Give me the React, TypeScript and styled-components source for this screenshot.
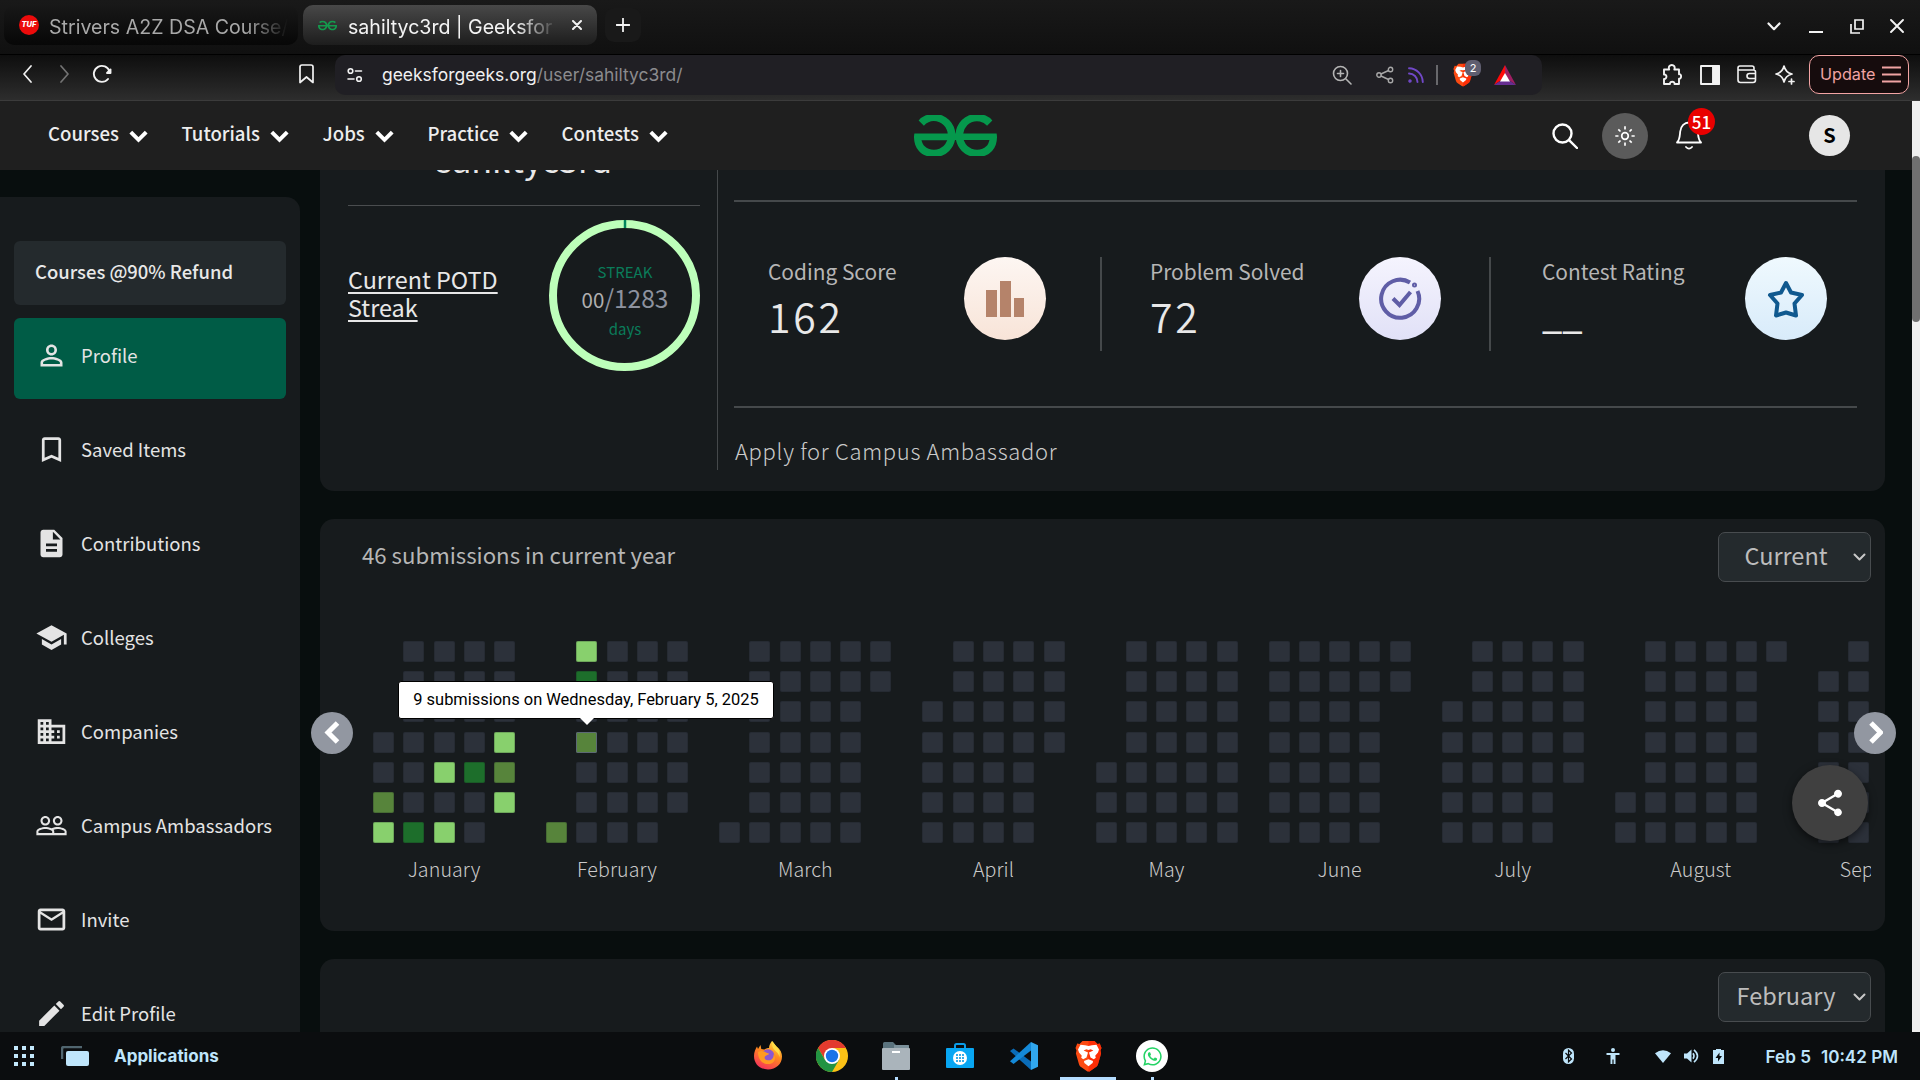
import React from "react";
import styled, { createGlobalStyle, css } from "styled-components";
import {
  MdPersonOutline,
  MdBookmarkBorder,
  MdDescription,
  MdSchool,
  MdBusiness,
  MdPeopleOutline,
  MdMailOutline,
  MdEdit,
  MdShare,
} from "react-icons/md";
import { SiGeeksforgeeks } from "react-icons/si";
import { FaWhatsapp } from "react-icons/fa";

const sans = `"Noto Sans CJK SC", "Noto Sans", sans-serif`;
const ui = `Inter, "Liberation Sans", sans-serif`;

const GlobalStyle = createGlobalStyle`
  * { box-sizing: border-box; }
  body { margin: 0; background: #080e0e; overflow: hidden; }
  svg { display: block; flex: none; }
`;

const Screen = styled.div`
  width: 1920px;
  height: 1080px;
  display: flex;
  flex-direction: column;
  overflow: hidden;
  font-family: ${sans};
  color: #e8e8e8;
`;

/* ---------- browser chrome ---------- */

const TabStrip = styled.div`
  height: 55px;
  flex: none;
  display: flex;
  align-items: flex-start;
  padding: 5px 16px 0 4px;
  background: linear-gradient(#191919, #101010);
  border-bottom: 1px solid #000;
  font-family: ${ui};
`;

const Tab = styled.div<{ $active?: boolean }>`
  width: 294px;
  height: 40px;
  margin-right: 5px;
  padding: 0 15px;
  display: flex;
  align-items: center;
  border-radius: 10px;
  background: ${(p) => (p.$active ? "linear-gradient(#484848, #1d1d1d)" : "linear-gradient(#181818, #070707)")};
`;

const TabTitle = styled.div<{ $active?: boolean }>`
  flex: 1;
  margin-left: ${(p) => (p.$active ? 11 : 10)}px;
  margin-right: ${(p) => (p.$active ? 0 : -5)}px;
  overflow: hidden;
  white-space: nowrap;
  font-size: 19.6px;
  line-height: 38px;
  padding-top: 3px;
  color: ${(p) => (p.$active ? "#f4f4f4" : "#a9a9a9")};
  mask-image: linear-gradient(to right, #000 calc(100% - 42px), transparent);
`;

const TufBadge = styled.div`
  width: 20px;
  height: 20px;
  border-radius: 50%;
  background: #ec0b0b;
  color: #fff;
  font: italic 800 7.5px/20px ${ui};
  text-align: center;
`;

const NewTab = styled.div`
  width: 36px;
  height: 34px;
  margin: 3px auto 0 3px;
  border-radius: 9px;
  background: #191919;
  display: grid;
  place-items: center;
`;

const WindowButtons = styled.div`
  display: flex;
  align-items: center;
  height: 42px;
  gap: 26.5px;
`;

const Toolbar = styled.div`
  height: 46px;
  flex: none;
  display: flex;
  align-items: flex-start;
  padding: 0 11px 0 18px;
  background: linear-gradient(#0e0e0e, #2d2d2d);
  border-bottom: 1px solid #3b3b3b;
  font-family: ${ui};
`;

const NavKeys = styled.div`
  display: flex;
  align-items: center;
  height: 38px;
  width: 317px;
  gap: 17px;
  & > :last-child { margin-left: auto; margin-right: 21px; }
`;

const UrlBar = styled.div`
  width: 1207px;
  height: 40px;
  padding: 0 26px 0 10px;
  display: flex;
  align-items: center;
  border-radius: 10px;
  background: #201f24;
`;

const Url = styled.div`
  flex: 1;
  margin: -1px 0 0 19px;
  font-size: 17.45px;
  color: #f0f0f0;
  span { color: #8b8b8e; }
`;

const UrlTools = styled.div`
  display: flex;
  align-items: center;
`;

const ToolSeparator = styled.div`
  width: 2px;
  height: 20px;
  margin: 0 15px 0 12px;
  background: #68686c;
`;

const Shield = styled.div`
  position: relative;
  width: 20px;
  height: 24px;
  margin-right: 21px;
`;

const ShieldCount = styled.div`
  position: absolute;
  left: 12px;
  top: -3px;
  width: 16px;
  height: 16px;
  border-radius: 6px;
  background: #5f5e70;
  color: #fff;
  font-size: 11px;
  line-height: 16px;
  text-align: center;
`;

const ToolbarIcons = styled.div`
  display: flex;
  align-items: center;
  height: 39px;
  gap: 17.6px;
  margin-left: auto;
  margin-right: 14px;
`;

const UpdateButton = styled.div`
  width: 100px;
  height: 39px;
  padding: 0 7px 1px 10px;
  display: flex;
  align-items: center;
  justify-content: space-between;
  border: 1.5px solid #f3a4a4;
  border-radius: 10px;
  background: #160c0d;
  color: #f0a3a3;
  font-size: 16.2px;
`;

/* ---------- web page ---------- */

const PageRow = styled.div`
  flex: 1;
  min-height: 0;
  display: flex;
`;

const Page = styled.div`
  width: 1912px;
  display: flex;
  flex-direction: column;
  overflow: hidden;
  background: #080e0e;
`;

const ScrollTrack = styled.div`
  width: 8px;
  padding-top: 55px;
  background: #efefef;
`;

const ScrollThumb = styled.div`
  height: 166px;
  border-radius: 5px;
  background: #707070;
`;

const SiteNav = styled.nav`
  height: 69px;
  flex: none;
  display: grid;
  grid-template-columns: 1fr auto 1fr;
  align-items: center;
  padding: 0 62px 0 48px;
  background: #1f1f1f;
`;

const Menu = styled.div`
  display: flex;
  gap: 33.6px;
  margin-top: -6px;
`;

const MenuItem = styled.div`
  display: flex;
  align-items: center;
  gap: 10px;
  font-size: 18.6px;
  line-height: 30px;
  font-weight: 500;
  color: #ededed;
  svg { margin-top: 7px; }
`;

const Logo = styled.div`
  margin-left: 13px;
  color: #05984c;
`;

const NavActions = styled.div`
  display: flex;
  align-items: center;
  justify-content: flex-end;
`;

const ThemeToggle = styled.div`
  width: 46px;
  height: 46px;
  margin: 0 28px 0 24px;
  border-radius: 50%;
  background: #5b5b5b;
  display: grid;
  place-items: center;
`;

const Bell = styled.div`
  position: relative;
  width: 26px;
  margin-right: 107px;
`;

const BellCount = styled.div`
  position: absolute;
  left: 12px;
  top: -13px;
  width: 27px;
  height: 27px;
  border-radius: 50%;
  background: #e90000;
  color: #fff;
  font-size: 17px;
  font-weight: 500;
  line-height: 27px;
  text-align: center;
`;

const Avatar = styled.div`
  width: 41px;
  height: 41px;
  border-radius: 50%;
  background: #e6e6e6;
  color: #000;
  font-size: 20px;
  font-weight: 700;
  line-height: 39px;
  text-align: center;
`;

const Body = styled.div`
  flex: 1;
  min-height: 0;
  display: flex;
  gap: 20px;
  overflow: hidden;
`;

const Sidebar = styled.aside`
  width: 300px;
  height: 900px;
  flex: none;
  margin-top: 27px;
  padding: 44px 14px 0;
  display: flex;
  flex-direction: column;
  gap: 13px;
  border-radius: 0 14px 0 0;
  background: #171b1d;
`;

const Promo = styled.div`
  height: 64px;
  flex: none;
  padding: 0 21px;
  border-radius: 6px;
  background: #242a2d;
  font-size: 18.45px;
  font-weight: 500;
  line-height: 60px;
`;

const SideItem = styled.div<{ $active?: boolean }>`
  height: 81px;
  flex: none;
  display: flex;
  align-items: center;
  gap: 13.5px;
  padding: 0 0 8px 20.5px;
  border-radius: 6px;
  background: ${(p) => (p.$active ? "#005c46" : "transparent")};
  font-size: 18.5px;
  color: #e4e4e4;
  svg { margin-top: 2px; }
`;

const Main = styled.main`
  width: 1565px;
  display: flex;
  flex-direction: column;
  gap: 28px;
`;

const Panel = styled.section<{ $height: number; $square?: boolean }>`
  position: relative;
  height: ${(p) => p.$height}px;
  flex: none;
  border-radius: ${(p) => (p.$square ? "0 0 14px 14px" : "14px")};
  background: #171b1d;
`;

const ProfilePanel = styled(Panel)`
  display: flex;
  padding-left: 28px;
`;

const Identity = styled.div`
  width: 370px;
  height: 300px;
  padding-right: 17px;
  border-right: 1px solid #45494b;
`;

const UserName = styled.div`
  display: flow-root;
  height: 36px;
  border-bottom: 1px solid #4a4d4f;
  font-size: 34.2px;
  line-height: 44px;
  text-align: center;
  span { display: block; margin-top: -34px; }
`;

const PotdRow = styled.div`
  display: flex;
  justify-content: space-between;
  padding-top: 14px;
`;

const PotdLabel = styled.div`
  width: 170px;
  margin-top: 45px;
  font-size: 23.4px;
  line-height: 28px;
  text-decoration: underline;
  text-decoration-thickness: 1.5px;
  text-underline-offset: 3px;
`;

const Ring = styled.div`
  position: relative;
  width: 152px;
  height: 152px;
`;

const RingText = styled.div`
  position: absolute;
  inset: 0 -1px 0 1px;
  padding-top: 42px;
  text-align: center;
  color: #0a7c5a;
  font-size: 15px;
  line-height: 20px;
`;

const StreakCount = styled.div`
  margin: -2px 0 2px;
  font-size: 24.5px;
  line-height: 36px;
  color: #8d929f;
  span { font-size: 20.5px; color: #b0b0b0; }
`;

const StatsColumn = styled.div`
  width: 1123px;
  margin-left: 16px;
  padding-top: 30px;
`;

const StatsRow = styled.div`
  height: 208px;
  padding-top: 55px;
  display: grid;
  grid-template-columns: 368px 389px 366px;
  border: solid #45494b;
  border-width: 2px 0;
`;

const Stat = styled.div<{ $left: number; $right: number; $last?: boolean }>`
  height: 94px;
  display: flex;
  justify-content: space-between;
  padding: 0 ${(p) => p.$right}px 0 ${(p) => p.$left}px;
  ${(p) => !p.$last && css`border-right: 2px solid #45494b;`}
`;

const StatLabel = styled.div`
  font-size: 20.9px;
  line-height: 28px;
  white-space: nowrap;
  color: #b6b6b6;
`;

const StatValue = styled.div<{ $empty?: boolean }>`
  margin-top: ${(p) => (p.$empty ? 2 : 4)}px;
  font-size: ${(p) => (p.$empty ? 36 : 41)}px;
  line-height: 52px;
  font-weight: ${(p) => (p.$empty ? 500 : 350)};
  letter-spacing: ${(p) => (p.$empty ? 0 : 2.7)}px;
`;

const StatIcon = styled.div<{ $from: string; $to: string }>`
  width: 82px;
  height: 83px;
  border-radius: 50%;
  background: linear-gradient(${(p) => p.$from}, ${(p) => p.$to});
  display: grid;
  place-items: center;
`;

const Apply = styled.div`
  margin: 28px 0 0 1px;
  font-size: 22px;
  line-height: 29px;
  letter-spacing: 0.68px;
  font-weight: 300;
  color: #cbcbcb;
`;

const PanelHead = styled.div`
  display: flex;
  justify-content: space-between;
  padding: 13px 14px 0 42px;
`;

const PanelTitle = styled.div`
  font-size: 22.2px;
  line-height: 45px;
  color: #b6b6b6;
`;

const Select = styled.div`
  width: 153px;
  height: 50px;
  padding: 0 4px 4px 0;
  display: flex;
  align-items: center;
  border: 1px solid #484c4f;
  border-radius: 7px;
  background: #242a2d;
  color: #bcbcbc;
  font-size: 23.5px;
  span { flex: 1; text-align: center; }
  svg { margin-top: 5px; }
`;

const HeatMap = styled.div`
  width: 1498px;
  margin: 59px 0 0 53px;
  display: flex;
  gap: 31px;
  overflow: hidden;
`;

const Month = styled.div`
  flex: none;
  text-align: center;
`;

const Days = styled.div<{ $cols: number }>`
  display: grid;
  grid-auto-flow: column;
  grid-template-rows: repeat(7, 21px);
  grid-template-columns: repeat(${(p) => p.$cols}, 21px);
  gap: 9.2px 9.27px;
`;

const levels = ["#2c313a", "#88d06d", "#57843b", "#1d6e2b"];

const Day = styled.div<{ $level: number; $row?: number; $hover?: boolean }>`
  grid-row-start: ${(p) => p.$row ?? "auto"};
  border-radius: 2px;
  background: ${(p) => levels[p.$level]};
  box-shadow: inset 0 0 0 1px ${(p) => (p.$hover ? "#5c6975" : "rgba(20, 24, 26, 0.22)")};
`;

const MonthName = styled.div`
  margin-top: 11px;
  font-size: 19.6px;
  line-height: 30px;
  font-weight: 300;
  letter-spacing: 0.1px;
  color: #cacaca;
`;

const Tooltip = styled.div`
  position: absolute;
  left: 78px;
  top: 162px;
  width: 376px;
  height: 38px;
  border: 1px solid #000;
  border-radius: 3px;
  background: #fff;
  color: #000;
  font: 16.45px/36px Roboto, sans-serif;
  text-align: center;
  &::after {
    content: "";
    position: absolute;
    left: 181px;
    top: 36px;
    border: 7px solid transparent;
    border-top-color: #fff;
    border-bottom: 0;
  }
`;

const Pager = styled.div<{ $left: number }>`
  position: absolute;
  left: ${(p) => p.$left}px;
  top: 193px;
  width: 42px;
  height: 42px;
  border-radius: 50%;
  background: #9297a1;
  display: grid;
  place-items: center;
`;

const ShareFab = styled.div`
  position: absolute;
  left: 1472px;
  top: 246px;
  width: 76px;
  height: 76px;
  border-radius: 50%;
  background: #404040;
  box-shadow: 0 3px 8px rgba(0, 0, 0, 0.55);
  display: grid;
  place-items: center;
`;

/* ---------- desktop bar ---------- */

const Taskbar = styled.div`
  height: 48px;
  flex: none;
  display: grid;
  grid-template-columns: 1fr auto 1fr;
  padding: 0 22px 0 14px;
  background: #0b0d0f;
  color: #bfe5fb;
  font-family: ${ui};
  font-weight: 600;
`;

const Launcher = styled.div`
  display: flex;
  align-items: center;
  font-size: 17px;
  span { margin-left: 25px; font-weight: 700; }
`;

const DotGrid = styled.div`
  display: grid;
  grid-template-columns: repeat(3, 4px);
  gap: 4px;
  margin-right: 27px;
  i { height: 4px; background: #c3e8fc; }
`;

const Apps = styled.div`
  display: flex;
  margin-left: 8px;
`;

const DockApp = styled.div<{ $mark?: number }>`
  width: 64px;
  display: flex;
  flex-direction: column;
  align-items: center;
  justify-content: space-between;
  padding-top: 8px;
  &::after {
    content: "";
    width: ${(p) => p.$mark ?? 0}px;
    height: 3px;
    background: #b4dcff;
  }
`;

const WhatsApp = styled.div`
  width: 32px;
  height: 32px;
  border-radius: 50%;
  background: #fff;
  color: #25d366;
  display: grid;
  place-items: center;
`;

const Tray = styled.div`
  display: flex;
  align-items: center;
  justify-content: flex-end;
  font-size: 17.1px;
`;

const Clock = styled.div`
  display: flex;
  gap: 10px;
  margin-left: 42px;
`;

const Gap = styled.div<{ $w: number }>`
  width: ${(p) => p.$w}px;
`;

/* ---------- drawings ---------- */

const Stroke = (p: { w: number; h: number; c?: string; s?: number; round?: boolean; children: React.ReactNode }) => (
  <svg
    width={p.w}
    height={p.h}
    viewBox={`0 0 ${p.w} ${p.h}`}
    fill="none"
    stroke={p.c ?? "#f2f2f2"}
    strokeWidth={p.s ?? 1.6}
    strokeLinecap={p.round === false ? "butt" : "round"}
    strokeLinejoin={p.round === false ? "miter" : "round"}
  >
    {p.children}
  </svg>
);

const MenuChevron = () => (
  <Stroke w={19} h={13} c="#fff" s={4} round={false}>
    <path d="M1.8 2.2l7.7 7.6 7.7-7.6" />
  </Stroke>
);

const SelectChevron = () => (
  <Stroke w={13} h={9} c="#c8c8c8" s={2}>
    <path d="M1.5 1.5l5 5 5-5" />
  </Stroke>
);

const BraveLion = ({ size }: { size: number }) => (
  <svg width={size} height={(size * 32) / 27} viewBox="0 0 27 32">
    <path d="M7.5 1h12l3 3 2.3-.4L26.5 8l-1 2.5.6 3-3 10.5c-.4 1.5-1.3 2.5-2.5 3.3l-6 4.2h-2.2l-6-4.2c-1.2-.8-2.1-1.8-2.5-3.3L.9 13.5l.6-3L.5 8l1.7-4.4L4.500 4z" fill="#fb4a12" />
    <path d="M13.5 1h6l3 3 2.3-.4L26.5 8l-1 2.5.6 3-3 10.5c-.4 1.5-1.3 2.5-2.5 3.3l-6 4.2h-1.1z" fill="#ff1f00" opacity=".65" />
    <path d="M13.5 6l3.500-.8 4.500-.4 2.500 4.700-1 3-2.800 3.200.6 2-2 1.600-3.300-1.800-1.500-5 4.400-2-2.800-1.200-2.100.6-2.100-.6L8.600 10.500l4.400 2-1.500 5L8.200 19.300l-2-1.600.6-2L4 12.500l-1-3L5.500 4.800l4.500.4z" fill="#fff" />
    <path d="M9 21l4.500-1.800L18 21l-.4 2-4.1 3.300L9.400 23z" fill="#fff" />
  </svg>
);

const Firefox = () => (
  <svg width="30" height="30" viewBox="0 0 30 30">
    <defs>
      <linearGradient id="ff" x1=".8" y1="0" x2=".3" y2="1">
        <stop offset="0" stopColor="#ffe14a" />
        <stop offset=".45" stopColor="#ff8a1e" />
        <stop offset="1" stopColor="#f5305c" />
      </linearGradient>
    </defs>
    <path d="M19 1c2 2 3 4 4.5 5.5C27.5 9.5 29 13 29 16.5 29 24 23 29.5 15 29.5S1 24 1 16c0-4 1.5-7 3-9.5l1 2.5L7.5 5l.8 4 3 .6c2-1.6 3.7-1.6 4.7-1.6C16 5 17.500 3 19 1z" fill="url(#ff)" />
    <circle cx="15" cy="15.5" r="6.2" fill="#8a58d0" />
    <path d="M5 12c3-2 6-1 8 .5 1.500 1 3 .5 3 1.300 0 1.200-3 1.300-4 2.800-1 1.300 0 3.500 3 3.700 4 .3 6-3 5.500-6C23.500 17 22 24 15.500 24 9 24.500 5 19 5 12z" fill="#ff9a22" />
    <path d="M19 1c2 2 3 4 4.500 5.500C27 9.500 27 14 26.500 17c-1-4-3-5-5-7s-3-5-2.500-9z" fill="#ffdc45" />
  </svg>
);

const Chrome = () => (
  <svg width="32" height="32" viewBox="0 0 32 32">
    <circle cx="16" cy="16" r="16" fill="#fbc116" />
    <path d="M2.1 8A16 16 0 0 1 29.9 8H16l-7 11.5z" fill="#e33b2e" />
    <path d="M2.100 8A16 16 0 0 0 16 32l7-12-7 2-6.900-2z" fill="#229342" />
    <circle cx="16" cy="16" r="8" fill="#fff" />
    <circle cx="16" cy="16" r="6.2" fill="#1a73e8" />
  </svg>
);

const Files = () => (
  <svg width="30" height="32" viewBox="0 0 30 32">
    <path d="M2 10V3.500Q2 2 3.500 2H12l3 3h12q1 0 1 1v6z" fill="#5a727d" />
    <path d="M13 5h14q1 0 1 1v4H13z" fill="#7c919b" />
    <rect x="1" y="8" width="28" height="22" rx="1" fill="#aab4bb" />
    <rect x="11" y="11" width="8" height="2" fill="#fff" />
  </svg>
);

const Store = () => (
  <svg width="28" height="32" viewBox="0 0 28 32">
    <path d="M9 9V5.500Q9 4 10.500 4h7Q19 4 19 5.500V9" fill="none" stroke="#0a9be6" strokeWidth="2" />
    <rect y="8" width="28" height="20" rx="1" fill="#08a6f3" />
    <circle cx="14" cy="18" r="7" fill="#fff" />
    <path d="M10 14h2v2h-2zM13 14h2v2h-2zM16 14h2v2h-2zM10 17h2v2h-2zM13 17h2v2h-2zM16 17h2v2h-2zM10 20h2v2h-2zM13 20h2v2h-2zM16 20h2v2h-2z" fill="#38aeea" />
  </svg>
);

const VsCode = () => (
  <svg width="28" height="32" viewBox="0 0 28 32">
    <path d="M21 30v-8.500L3.500 8.500 0 11z" fill="#0a6cb8" />
    <path d="M0 21.300L3.500 24 21 10.500V2z" fill="#1489d8" />
    <path d="M21 2l7 3.200v21.600L21 30z" fill="#31a7ee" />
  </svg>
);

/* ---------- data ---------- */

const sideItems = [
  { label: "Profile", Icon: MdPersonOutline },
  { label: "Saved Items", Icon: MdBookmarkBorder },
  { label: "Contributions", Icon: MdDescription },
  { label: "Colleges", Icon: MdSchool },
  { label: "Companies", Icon: MdBusiness },
  { label: "Campus Ambassadors", Icon: MdPeopleOutline },
  { label: "Invite", Icon: MdMailOutline },
  { label: "Edit Profile", Icon: MdEdit },
];

const monthNames = ["January", "February", "March", "April", "May", "June", "July", "August", "September"];

const activity: Record<string, number> = {
  "0-3": 2, "0-4": 1, "0-11": 3, "0-16": 1, "0-18": 1, "0-23": 3,
  "0-29": 1, "0-30": 2, "0-31": 1, "1-1": 2, "1-2": 1, "1-3": 3, "1-5": 2,
};

const months = monthNames.map((name, m) => {
  const first = new Date(2025, m, 1).getDay();
  const count = new Date(2025, m + 1, 0).getDate();
  return { name, first, count, cols: Math.ceil((first + count) / 7) };
});

export default function App() {
  return (
    <Screen>
      <GlobalStyle />
      <TabStrip>
        <Tab>
          <TufBadge>TUF</TufBadge>
          <TabTitle>Strivers A2Z DSA Course/</TabTitle>
        </Tab>
        <Tab $active>
          <SiGeeksforgeeks size={19} color="#149a4d" />
          <TabTitle $active>sahiltyc3rd | Geeksfor</TabTitle>
          <Gap $w={14} />
          <Stroke w={10} h={10} s={2}><path d="M1 1l8 8M9 1L1 9" /></Stroke>
        </Tab>
        <NewTab><Stroke w={14} h={14} s={1.8}><path d="M7 .5v13M.5 7h13" /></Stroke></NewTab>
        <WindowButtons>
          <Stroke w={14} h={9} s={2.2}><path d="M1.5 1.5L7 7.200l5.500-5.700" /></Stroke>
          <Stroke w={16} h={16} s={2} round={false}><path d="M2 14h14" /></Stroke>
          <Stroke w={14} h={15} s={1.7} round={false}><path d="M5 1h8v9H5zM1 5v9h9" /></Stroke>
          <Stroke w={14} h={14} s={1.9}><path d="M1 1l12 12M13 1L1 13" /></Stroke>
        </WindowButtons>
      </TabStrip>

      <Toolbar>
        <NavKeys>
          <Stroke w={20} h={18} s={1.7}><path d="M13 1L6 9l7 8" /></Stroke>
          <Stroke w={20} h={18} c="#737373" s={1.7}><path d="M6 1l7 8-7 8" /></Stroke>
          <Stroke w={20} h={20} s={1.9}>
            <path d="M16 15A8 8 0 1 1 17.500 7.500" />
            <path d="M18.500 5.500v3.500h-3.500z" fill="#f2f2f2" />
          </Stroke>
          <Stroke w={15} h={20} s={1.7}><path d="M1 3q0-2 2-2h9q2 0 2 2v15.500l-6.500-5.500L1 18.500z" /></Stroke>
        </NavKeys>
        <UrlBar>
          <Gap $w={2} />
          <Stroke w={16} h={16} s={1.6}>
            <circle cx="3.5" cy="4" r="2.3" /><path d="M8.5 4h6M1 12h6" /><circle cx="12" cy="12" r="2.3" />
          </Stroke>
          <Url>geeksforgeeks.org<span>/user/sahiltyc3rd/</span></Url>
          <UrlTools>
            <Stroke w={20} h={20} c="#b4b4b4"><circle cx="8.5" cy="8.5" r="7" /><path d="M14 14l5 5M8.5 5.5v6M5.500 8.500h6" /></Stroke>
            <Gap $w={24} />
            <Stroke w={18} h={18} c="#a8a8a8" s={1.4}><circle cx="3" cy="9" r="2.2" /><circle cx="14.5" cy="3.5" r="2.2" /><circle cx="14.5" cy="14.5" r="2.2" /><path d="M5 8l7.500-3.500M5 10l7.500 3.500" /></Stroke>
            <Gap $w={14} />
            <Stroke w={16} h={16} c="#7148c8" s={1.9}><path d="M1 1.200A14 14 0 0 1 14.800 15M1 6.500A8.500 8.500 0 0 1 9.500 15" /><circle cx="2" cy="14" r=".8" /></Stroke>
            <ToolSeparator />
            <Shield><BraveLion size={20} /><ShieldCount>2</ShieldCount></Shield>
            <svg width="22" height="20" viewBox="0 0 22 20">
              <path d="M11 0L0 20l11-7.500z" fill="#ff0a0a" /><path d="M11 0l11 20-11-7.500z" fill="#9e1f63" /><path d="M0 20h22l-6-4H6z" fill="#662d91" /><path d="M11 8l-5 8.500h10z" fill="#fff" />
            </svg>
          </UrlTools>
        </UrlBar>
        <ToolbarIcons>
          <Stroke w={20} h={21} s={1.9}><path d="M2 5.500h5.200C6 2.500 8 1 9.800 1s3.700 1.500 2.500 4.500H17v4.700c3-.5 2.500 5 0 4.500V20h-4.500c.5-3-5-3-4.500 0H2v-5c3 .5 3.500-5 0-4.500z" /></Stroke>
          <Stroke w={20} h={20} s={1.9}><rect x="1" y="1" width="18" height="18" /><path d="M13 1h6v18h-6z" fill="#f2f2f2" /></Stroke>
          <Stroke w={20} h={19} s={1.6}><path d="M17 5V3q0-2-2-2H3Q1 1 1 3v12q0 2.500 2.500 2.500H16q2.500 0 2.500-2.500V7q0-2-2-2H2M18.500 8.500h-6q-2.500 0-2.500 2.500t2.500 2.500h6" /></Stroke>
          <Stroke w={20} h={20} s={1.7}><path d="M9 1q1.500 6.500 8 8-6.500 1.500-8 8-1.500-6.500-8-8 6.500-1.500 8-8zM16.500 14v5M14 16.500h5" /></Stroke>
        </ToolbarIcons>
        <UpdateButton>
          Update
          <Stroke w={19} h={17} c="#f0a3a3" s={1.8} round={false}><path d="M0 1.500h19M0 8.500h19M0 15.500h19" /></Stroke>
        </UpdateButton>
      </Toolbar>

      <PageRow>
        <Page>
          <SiteNav>
            <Menu>
              {["Courses", "Tutorials", "Jobs", "Practice", "Contests"].map((label) => (
                <MenuItem key={label}>{label}<MenuChevron /></MenuItem>
              ))}
            </Menu>
            <Logo>
              <SiGeeksforgeeks size={83} viewBox="0 6.2 24 11.6" style={{ height: 41 }} preserveAspectRatio="none" />
            </Logo>
            <NavActions>
              <Stroke w={26} h={26} c="#fff" s={2.4}><circle cx="10.5" cy="10.5" r="9" /><path d="M17.300 17.300L25 25" /></Stroke>
              <ThemeToggle>
                <Stroke w={20} h={20} c="#fff" s={1.7} round={false}>
                  <circle cx="10" cy="10" r="3.3" />
                  <path d="M10 .3v3.200M10 16.500v3.200M.3 10h3.200M16.500 10h3.200M3.300 3.300l2.200 2.200M14.500 14.500l2.200 2.200M3.300 16.700l2.200-2.200M14.500 5.500l2.200-2.200" />
                </Stroke>
              </ThemeToggle>
              <Bell>
                <Stroke w={26} h={29} c="#fff" s={1.8}>
                  <path d="M1 21.500C4 18.500 3.800 14 4.200 10.500 4.800 5 8.500 1.500 13 1.500s8.200 3.500 8.800 9c.4 3.500.2 8 3.200 11zM10 26q3 3.200 6 0" />
                </Stroke>
                <BellCount>51</BellCount>
              </Bell>
              <Avatar>S</Avatar>
            </NavActions>
          </SiteNav>

          <Body>
            <Sidebar>
              <Promo>Courses @90% Refund</Promo>
              {sideItems.map(({ label, Icon }, i) => (
                <SideItem key={label} $active={i === 0}>
                  <Icon size={33} />
                  {label}
                </SideItem>
              ))}
            </Sidebar>

            <Main>
              <ProfilePanel $height={321} $square>
                <Identity>
                  <UserName><span>sahiltyc3rd</span></UserName>
                  <PotdRow>
                    <PotdLabel>Current POTD Streak</PotdLabel>
                    <Ring>
                      <svg width="153" height="152">
                        <circle cx="76.5" cy="75.5" r="71.5" fill="none" stroke="#bdffba" strokeWidth="8" />
                        <path d="M77 0v8" stroke="#00855c" strokeWidth="2.5" />
                      </svg>
                      <RingText>
                        STREAK
                        <StreakCount><span>00</span>/1283</StreakCount>
                        days
                      </RingText>
                    </Ring>
                  </PotdRow>
                </Identity>
                <StatsColumn>
                  <StatsRow>
                    <Stat $left={34} $right={54}>
                      <div><StatLabel>Coding Score</StatLabel><StatValue>162</StatValue></div>
                      <StatIcon $from="#fdf6f2" $to="#f8e4d8">
                        <svg width="40" height="36"><path d="M1 9h11v27H1zM15 0h11v36H15zM29 17h10v19H29z" fill="#b5836a" /></svg>
                      </StatIcon>
                    </Stat>
                    <Stat $left={48} $right={48}>
                      <div><StatLabel>Problem Solved</StatLabel><StatValue>72</StatValue></div>
                      <StatIcon $from="#f5f4fe" $to="#e1e1f7">
                        <Stroke w={44} h={44} c="#5f5da6" s={4} round={false}>
                          <path d="M32 5.500A19 19 0 1 0 39.500 14" /><path d="M15 21.500l6.500 6.500L32.500 15" />
                          <circle cx="36.5" cy="8" r="1" strokeWidth="3" />
                        </Stroke>
                      </StatIcon>
                    </Stat>
                    <Stat $left={51} $right={30} $last>
                      <div><StatLabel>Contest Rating</StatLabel><StatValue $empty>__</StatValue></div>
                      <StatIcon $from="#eff9fe" $to="#d8ebfa">
                        <Stroke w={38} h={38} c="#10598f" s={4}>
                          <path d="M19 3l5 9.500 11 2.500-7.500 8.500 1.500 12-10-3-10 3 1.500-12L3 15l11-2.500z" />
                        </Stroke>
                      </StatIcon>
                    </Stat>
                  </StatsRow>
                  <Apply>Apply for Campus Ambassador</Apply>
                </StatsColumn>
              </ProfilePanel>

              <Panel $height={412}>
                <PanelHead>
                  <PanelTitle>46 submissions in current year</PanelTitle>
                  <Select><span>Current</span><SelectChevron /></Select>
                </PanelHead>
                <HeatMap>
                  {months.map(({ name, first, count, cols }, m) => (
                    <Month key={name}>
                      <Days $cols={cols}>
                        {Array.from({ length: count }, (_, d) => (
                          <Day
                            key={d}
                            $row={d === 0 ? first + 1 : undefined}
                            $level={activity[`${m}-${d + 1}`] ?? 0}
                            $hover={m === 1 && d === 4}
                          />
                        ))}
                      </Days>
                      <MonthName>{name}</MonthName>
                    </Month>
                  ))}
                </HeatMap>
                <Tooltip>9 submissions on Wednesday, February 5, 2025</Tooltip>
                <Pager $left={-9.5}><Stroke w={16} h={24} c="#fff" s={5} round={false}><path d="M13.500 2L4 11.500l9.500 9.500" /></Stroke></Pager>
                <Pager $left={1534}><Stroke w={16} h={24} c="#fff" s={5} round={false}><path d="M4 2l9.500 9.500L4 21" /></Stroke></Pager>
                <ShareFab><MdShare size={32} color="#fff" /></ShareFab>
              </Panel>

              <Panel $height={200}>
                <PanelHead>
                  <PanelTitle />
                  <Select><span>February</span><SelectChevron /></Select>
                </PanelHead>
              </Panel>
            </Main>
          </Body>
        </Page>
        <ScrollTrack><ScrollThumb /></ScrollTrack>
      </PageRow>

      <Taskbar>
        <Launcher>
          <DotGrid>{Array.from({ length: 9 }, (_, i) => <i key={i} />)}</DotGrid>
          <svg width="28" height="20" viewBox="0 0 28 20">
            <path d="M1 13V3q0-2 2-2h18" fill="none" stroke="#50656f" strokeWidth="2.5" />
            <rect x="5" y="5" width="23" height="15" rx="2" fill="#bfe5fb" />
          </svg>
          <span>Applications</span>
        </Launcher>
        <Apps>
          <DockApp><Firefox /></DockApp>
          <DockApp><Chrome /></DockApp>
          <DockApp $mark={3}><Files /></DockApp>
          <DockApp><Store /></DockApp>
          <DockApp><VsCode /></DockApp>
          <DockApp $mark={56}><BraveLion size={27} /></DockApp>
          <DockApp $mark={3}><WhatsApp><FaWhatsapp size={21} /></WhatsApp></DockApp>
        </Apps>
        <Tray>
          <svg width="12" height="16" viewBox="0 0 12 16">
            <rect width="11" height="16" rx="5.5" fill="#bfe5fb" /><path d="M2.500 5l6 6-3 2.800V2.200l3 2.800-6 6" fill="none" stroke="#0b0d0f" strokeWidth="1.2" />
          </svg>
          <Gap $w={31} />
          <svg width="14" height="16" viewBox="0 0 14 16" fill="#bfe5fb"><circle cx="7" cy="2" r="2" /><path d="M.5 5h13v2H9.500v9H7.600v-4.500H6.400V16H4.500V7h-4z" /></svg>
          <Gap $w={35} />
          <svg width="16" height="13" viewBox="0 0 16 13"><path d="M0 3.200Q8-2.800 16 3.200L8 13z" fill="#bfe5fb" /></svg>
          <Gap $w={13} />
          <svg width="15" height="14" viewBox="0 0 15 14"><path d="M0 4.500h3L7.500.5v13L3 9.500H0z" fill="#bfe5fb" /><path d="M9 4.300q2 2.700 0 5.400M10 .9q7 6.100 0 12.200" fill="none" stroke="#bfe5fb" strokeWidth="1.6" /></svg>
          <Gap $w={14} />
          <svg width="11" height="15" viewBox="0 0 11 15"><path d="M0 1h3V0h5v1h3v14H0z" fill="#bfe5fb" /><path d="M6.500 3.500L2.500 9H5v3.500L9 7H6.500z" fill="#0b0d0f" /></svg>
          <Clock><span>Feb 5</span><span>10:42 PM</span></Clock>
        </Tray>
      </Taskbar>
    </Screen>
  );
}
